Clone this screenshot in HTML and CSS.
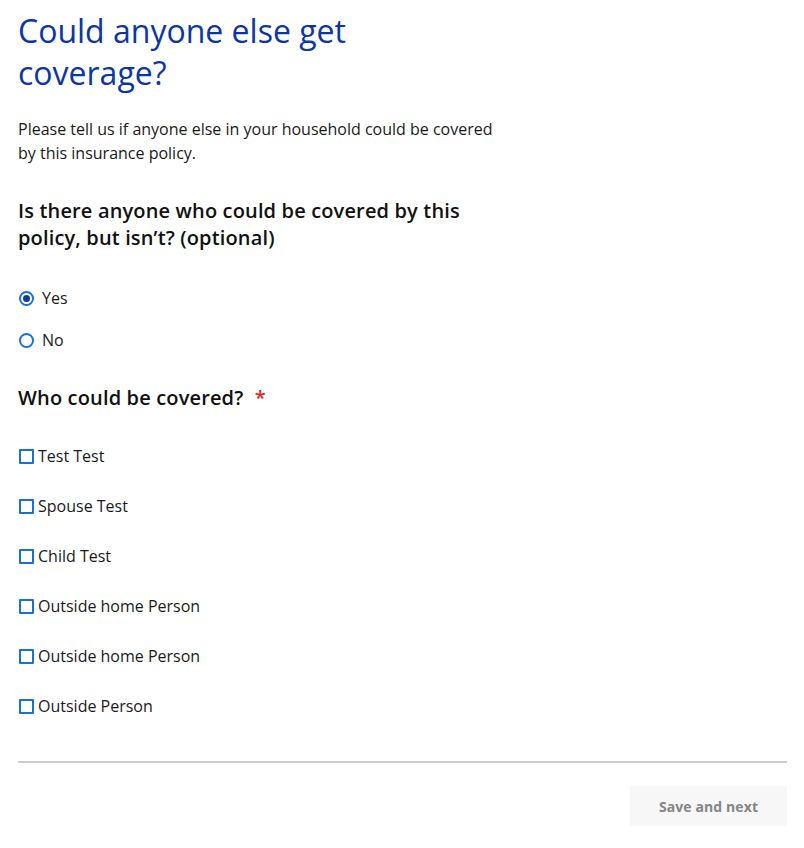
FILE: index.html
```html
<!DOCTYPE html>
<html lang="en">
<head>
<meta charset="utf-8">
<title>Could anyone else get coverage?</title>
<link rel="stylesheet" href="styles.css">
</head>
<body>
<main class="page">
  <div class="content">
    <h1 class="title">Could anyone else get coverage?</h1>
    <p class="intro">Please tell us if anyone else in your household could be covered by this insurance policy.</p>

    <section class="group" role="radiogroup" aria-labelledby="q1">
      <h2 class="question" id="q1">Is there anyone who could be covered by this policy, but isn’t? (optional)</h2>
      <div class="radios">
        <label class="option"><span class="radio checked"></span><span class="label">Yes</span></label>
        <label class="option"><span class="radio"></span><span class="label">No</span></label>
      </div>
    </section>

    <section class="group" aria-labelledby="q2">
      <h2 class="question" id="q2">Who could be covered? <span class="req">*</span></h2>
      <div class="checks">
        <label class="check"><span class="box"></span><span class="label">Test Test</span></label>
        <label class="check"><span class="box"></span><span class="label">Spouse Test</span></label>
        <label class="check"><span class="box"></span><span class="label">Child Test</span></label>
        <label class="check"><span class="box"></span><span class="label">Outside home Person</span></label>
        <label class="check"><span class="box"></span><span class="label">Outside home Person</span></label>
        <label class="check"><span class="box"></span><span class="label">Outside Person</span></label>
      </div>
    </section>
  </div>

  <div class="footer">
    <button class="next" type="button">Save and next</button>
  </div>
</main>
</body>
</html>
```

FILE: styles.css
```css
* { box-sizing: border-box; }

html, body {
  margin: 0;
  padding: 0;
  background: #ffffff;
}

body {
  font-family: "Open Sans", "Noto Sans", sans-serif;
  color: #1a1a1a;
}

.page {
  padding: 10px 17px 21px 18px;
}

.content {
  max-width: 482px;
}

.title {
  margin: 0;
  font-size: 32px;
  line-height: 42px;
  font-weight: 400;
  color: #0b36a6;
}

.intro {
  margin: 23px 0 0;
  font-size: 16px;
  line-height: 24px;
  color: #1a1a1a;
}

.group {
  margin: 0;
  padding: 0;
}

.question {
  margin: 32px 0 0;
  font-size: 20px;
  line-height: 27px;
  font-weight: 600;
  letter-spacing: 0.15px;
  color: #111111;
}

.req {
  color: #ee1c1c;
  margin-left: 6px;
  font-weight: 600;
}

.radios {
  display: flex;
  flex-direction: column;
  gap: 18px;
  margin-top: 35px;
}

.option,
.check {
  display: flex;
  align-items: center;
  height: 24px;
  font-size: 16px;
  line-height: 24px;
  color: #1a1a1a;
}

.radio {
  width: 15px;
  height: 15px;
  border: 2px solid #1a6fe0;
  border-radius: 50%;
  margin-left: 1px;
  margin-right: 8px;
  display: flex;
  align-items: center;
  justify-content: center;
}

.radio.checked::after {
  content: "";
  width: 7px;
  height: 7px;
  border-radius: 50%;
  background: #0b3aa6;
}

.checks {
  display: flex;
  flex-direction: column;
  gap: 26px;
  margin-top: 33px;
}

.box {
  width: 15px;
  height: 15px;
  border: 2px solid #1a6fe0;
  border-radius: 1px;
  margin-left: 1px;
  margin-right: 4px;
}

.footer {
  margin-top: 43px;
  border-top: 2px solid #cccccc;
  padding-top: 23px;
  display: flex;
  justify-content: flex-end;
}

.next {
  width: 157px;
  height: 40px;
  border: 0;
  background: #f7f7f7;
  color: #858585;
  font-family: "Open Sans", "Noto Sans", sans-serif;
  font-size: 14px;
  font-weight: 700;
  letter-spacing: 0.1px;
}
```
